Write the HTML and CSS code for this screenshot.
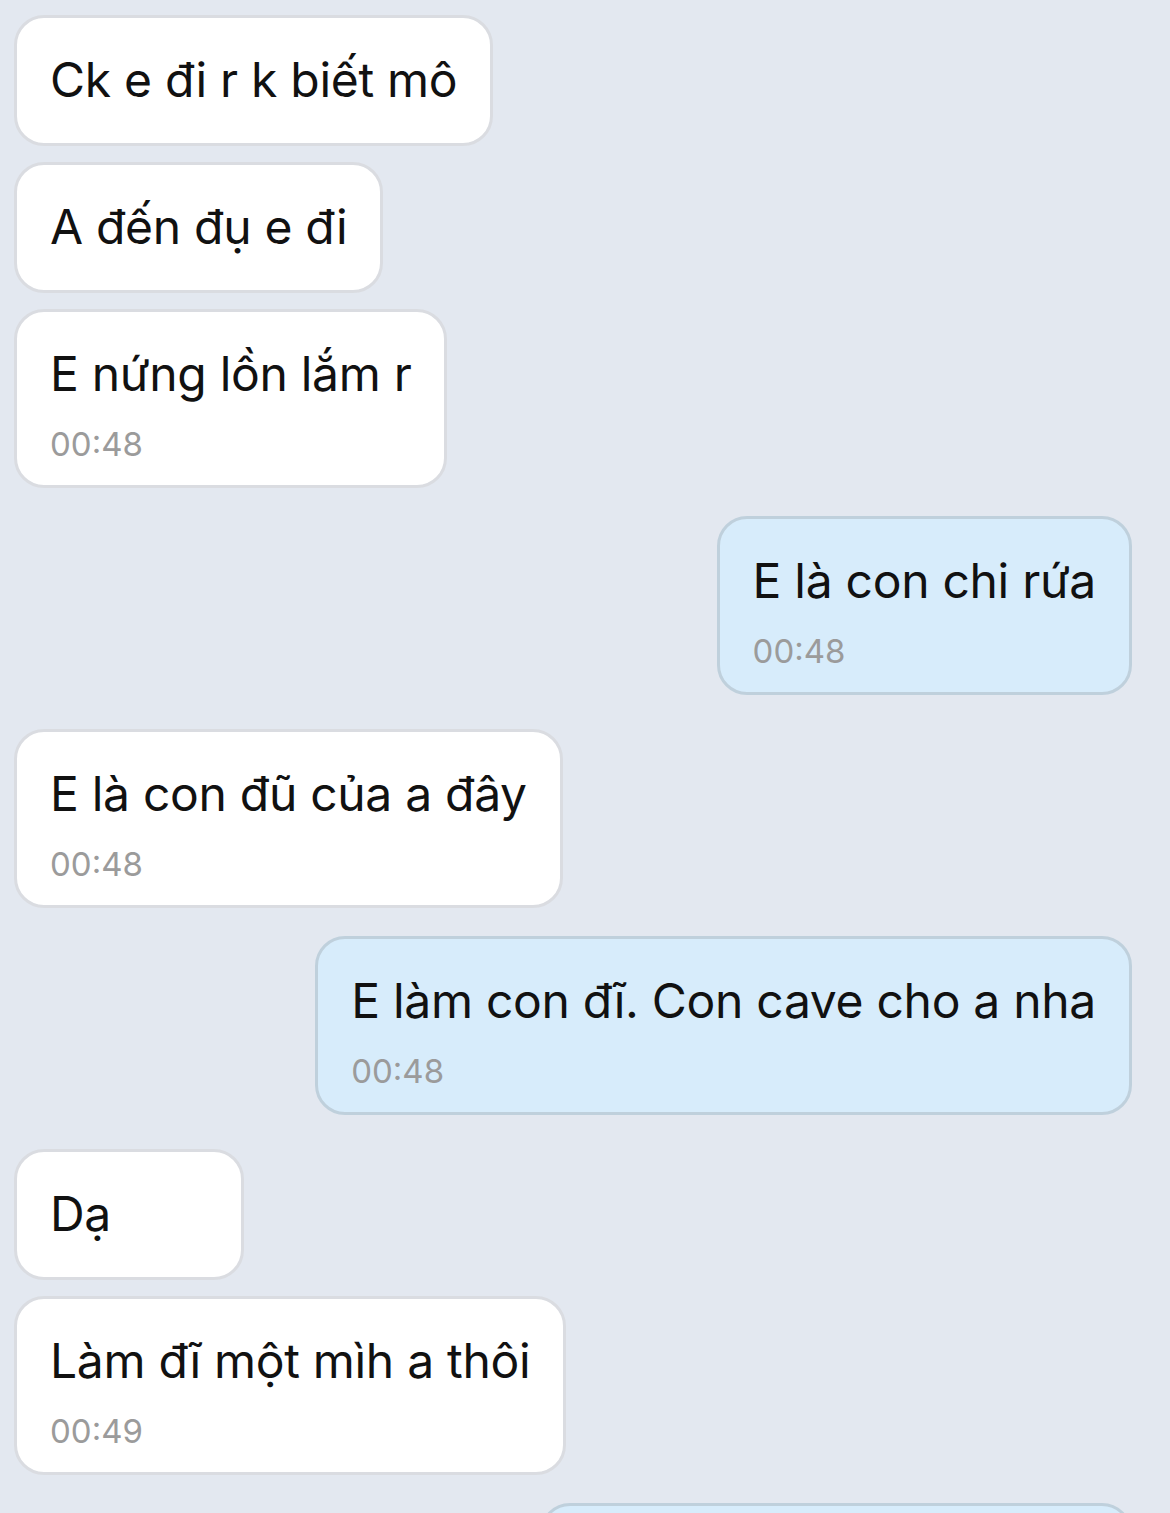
FILE: index.html
```html
<!DOCTYPE html>
<html lang="vi">
<head>
<meta charset="utf-8">
<link rel="stylesheet" href="styles.css">
</head>
<body>
<div class="chat">
  <div class="msg in"><div class="text">Ck e đi r k biết mô</div></div>
  <div class="msg in same"><div class="text">A đến đụ e đi</div></div>
  <div class="msg in same timed"><div class="text">E nứng lồn lắm r</div><div class="time">00:48</div></div>
  <div class="msg out switch-out timed"><div class="text">E là con chi rứa</div><div class="time">00:48</div></div>
  <div class="msg in switch-in timed"><div class="text">E là con đũ của a đây</div><div class="time">00:48</div></div>
  <div class="msg out switch-out timed"><div class="text">E làm con đĩ. Con cave cho a nha</div><div class="time">00:48</div></div>
  <div class="msg in switch-in"><div class="text">Dạ</div></div>
  <div class="msg in same timed"><div class="text">Làm đĩ một mìh a thôi</div><div class="time">00:49</div></div>
  <div class="msg out switch-out tail"></div>
</div>
</body>
</html>
```
FILE: styles.css
```css
html, body {
  margin: 0;
  padding: 0;
  background: #e3e8f0;
  height: 1513px;
  overflow: hidden;
}
body {
  font-family: Inter, "Noto Sans", sans-serif;
  color: #111;
}
.chat {
  display: flex;
  flex-direction: column;
  padding: 15px 38px 0 14px;
}
.msg {
  box-sizing: border-box;
  border-radius: 30px;
  border: 3px solid #dadce1;
  background: #fff;
  padding: 29px 33px 30px 33px;
  min-width: 230px;
}
.timed { padding-bottom: 17px; }
.in { align-self: flex-start; }
.out {
  align-self: flex-end;
  background: #d7ecfb;
  border-color: #bfd0dc;
}
.same { margin-top: 16px; }
.switch-out { margin-top: 28px; }
.switch-in { margin-top: 34px; }
.text {
  font-size: 48px;
  line-height: 66px;
  letter-spacing: -0.3px;
  white-space: nowrap;
}
.time {
  font-size: 33px;
  line-height: 48px;
  color: #9b9b9b;
  margin-top: 13px;
}
.tail {
  width: 592px;
  height: 120px;
}
```
